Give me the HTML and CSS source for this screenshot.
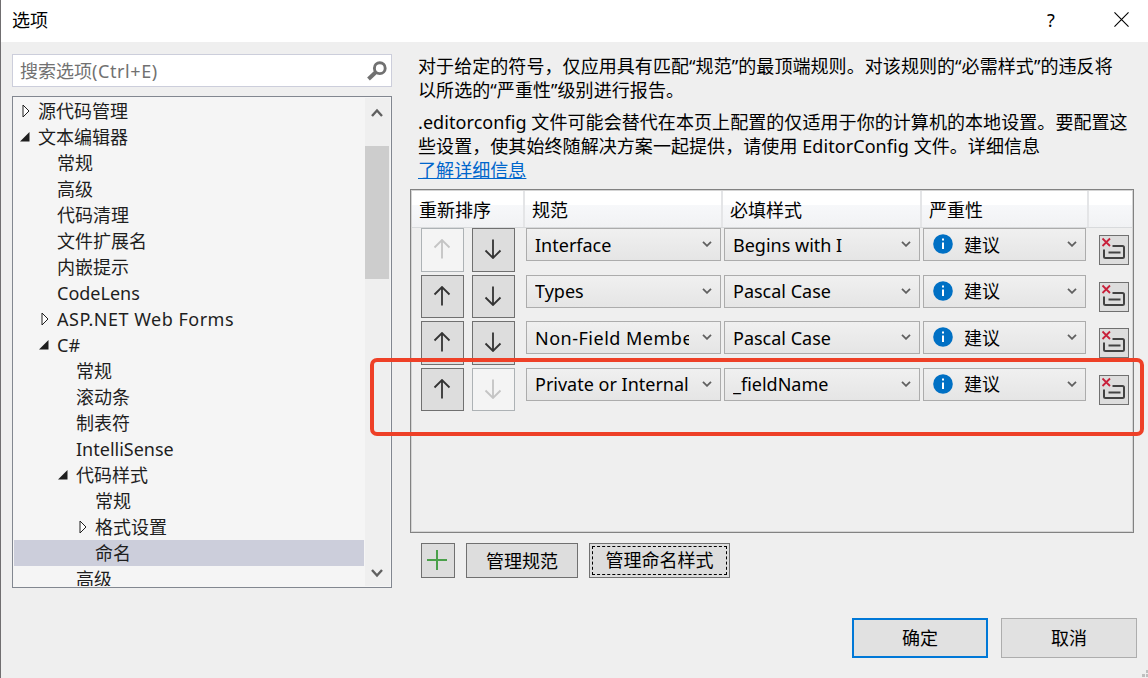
FILE: index.html
```
<!DOCTYPE html>
<html lang="zh-CN">
    <head>
        <meta charset="UTF-8">
        <title>选项</title>
        <link rel="stylesheet" href="styles.css">
    </head>
    <body>
        <svg class="defs">
            <symbol id="up" viewBox="0 0 20 20"><path d="M10 19.5V1M2.500 8.500L10 1l7.500 7.500"/></symbol>
            <symbol id="down" viewBox="0 0 20 20"><path d="M10 .5V19M2.500 11.500L10 19l7.500-7.500"/></symbol>
            <symbol id="chevron" viewBox="0 0 10 6"><path d="M1 .8l4 4 4-4"/></symbol>
            <symbol id="closed" viewBox="0 0 8 14"><path d="M1 1v12l6-6z"/></symbol>
            <symbol id="open" viewBox="0 0 10 10"><path d="M9.500 0v9.500H0z"/></symbol>
            <symbol id="info" viewBox="0 0 20 20"><circle cx="10" cy="10" r="9.800" fill="#0070c4"/><path d="M10 8.500v6.500M10 4.500v2" stroke="#fff" stroke-width="2" fill="none"/></symbol>
            <symbol id="remove" viewBox="0 0 28 28">
                <path d="M12.500 10h10q1.500 0 1.500 1.500v9q0 1.500-1.500 1.500h-17q-1.500 0-1.500-1.500v-7" fill="none" stroke="#424242" stroke-width="2"/>
                <path d="M8.500 16.500h12" stroke="#424242" stroke-width="2"/>
                <path d="M2.500 2.500l7.500 7.500M10 2.500L2.500 10" stroke="#c8203a" stroke-width="1.800"/>
            </symbol>
        </svg>

        <div class="dialog">
            <div class="titlebar">
                <span class="title">选项</span>
                <span class="help">?</span>
                <svg class="close" viewBox="0 0 16 16"><path d="M.5.5l15 15M15.500.5l-15 15"/></svg>
            </div>

            <div class="content">
                <div class="sidebar">
                    <div class="search">
                        <div>搜索选项<span class="wide">(Ctrl+E)</span></div>
                        <svg viewBox="0 0 20 20"><circle cx="12.800" cy="7.200" r="5.400" fill="none" stroke="#717171" stroke-width="2.900"/><path d="M9 11L1.500 18" stroke="#717171" stroke-width="4"/></svg>
                    </div>
                    <div class="tree">
                        <ul class="nodes">
                            <li class="l1"><svg class="closed"><use href="#closed"/></svg>源代码管理</li>
                            <li class="l1"><svg class="open"><use href="#open"/></svg>文本编辑器</li>
                            <li class="l2">常规</li>
                            <li class="l2">高级</li>
                            <li class="l2">代码清理</li>
                            <li class="l2">文件扩展名</li>
                            <li class="l2">内嵌提示</li>
                            <li class="l2">CodeLens</li>
                            <li class="l2"><svg class="closed"><use href="#closed"/></svg><span class="loose">ASP.NET Web Forms</span></li>
                            <li class="l2"><svg class="open"><use href="#open"/></svg>C#</li>
                            <li class="l3">常规</li>
                            <li class="l3">滚动条</li>
                            <li class="l3">制表符</li>
                            <li class="l3">IntelliSense</li>
                            <li class="l3"><svg class="open"><use href="#open"/></svg>代码样式</li>
                            <li class="l4">常规</li>
                            <li class="l4"><svg class="closed"><use href="#closed"/></svg>格式设置</li>
                            <li class="l4 selected">命名</li>
                            <li class="l3">高级</li>
                        </ul>
                        <div class="scrollbar">
                            <svg viewBox="0 0 12 9"><path d="M1 8l5-5.500L11 8"/></svg>
                            <div class="thumb"></div>
                            <svg viewBox="0 0 12 9"><path d="M1 1l5 5.500L11 1"/></svg>
                        </div>
                    </div>
                </div>

                <div class="page">
                    <p>对于给定的符号，仅应用具有匹配“规范”的最顶端规则。对该规则的“必需样式”的违反将<br>以所选的“严重性”级别进行报告。</p>
                    <p>.editorconfig 文件可能会替代在本页上配置的仅适用于你的计算机的本地设置。要配置这<br>些设置，使其始终随解决方案一起提供，请使用 EditorConfig 文件。详细信息<br><a class="link">了解详细信息</a></p>

                    <div class="grid">
                        <div class="row head">
                            <div>重新排序</div><div>规范</div><div>必填样式</div><div>严重性</div><div></div>
                        </div>
                        <div class="row">
                            <div class="order"><button disabled><svg><use href="#up"/></svg></button><button><svg><use href="#down"/></svg></button></div>
                            <div class="combo"><span>Interface</span><svg><use href="#chevron"/></svg></div>
                            <div class="combo"><span>Begins with I</span><svg><use href="#chevron"/></svg></div>
                            <div class="combo severity"><svg class="info"><use href="#info"/></svg><span>建议</span><svg><use href="#chevron"/></svg></div>
                            <button class="remove"><svg><use href="#remove"/></svg></button>
                        </div>
                        <div class="row">
                            <div class="order"><button><svg><use href="#up"/></svg></button><button><svg><use href="#down"/></svg></button></div>
                            <div class="combo"><span>Types</span><svg><use href="#chevron"/></svg></div>
                            <div class="combo"><span>Pascal Case</span><svg><use href="#chevron"/></svg></div>
                            <div class="combo severity"><svg class="info"><use href="#info"/></svg><span>建议</span><svg><use href="#chevron"/></svg></div>
                            <button class="remove"><svg><use href="#remove"/></svg></button>
                        </div>
                        <div class="row">
                            <div class="order"><button><svg><use href="#up"/></svg></button><button><svg><use href="#down"/></svg></button></div>
                            <div class="combo"><span class="loose">Non-Field Members</span><svg><use href="#chevron"/></svg></div>
                            <div class="combo"><span>Pascal Case</span><svg><use href="#chevron"/></svg></div>
                            <div class="combo severity"><svg class="info"><use href="#info"/></svg><span>建议</span><svg><use href="#chevron"/></svg></div>
                            <button class="remove"><svg><use href="#remove"/></svg></button>
                        </div>
                        <div class="row">
                            <div class="order"><button><svg><use href="#up"/></svg></button><button disabled><svg><use href="#down"/></svg></button></div>
                            <div class="combo"><span>Private or Internal</span><svg><use href="#chevron"/></svg></div>
                            <div class="combo"><span>_fieldName</span><svg><use href="#chevron"/></svg></div>
                            <div class="combo severity"><svg class="info"><use href="#info"/></svg><span>建议</span><svg><use href="#chevron"/></svg></div>
                            <button class="remove"><svg><use href="#remove"/></svg></button>
                        </div>
                    </div>

                    <div class="actions">
                        <button class="add"><svg viewBox="0 0 20 20"><path d="M10 0v20M0 10h20"/></svg></button>
                        <button class="specs">管理规范</button>
                        <button class="styles"><span>管理命名样式</span></button>
                    </div>
                </div>
            </div>

            <div class="footer">
                <button class="ok">确定</button>
                <button>取消</button>
            </div>
            <svg class="grip" viewBox="0 0 6 7"><path d="M4 0h2v3H4zM0 4h3v3H0zM4 4h2v3H4z"/></svg>
            <div class="highlight"></div>
        </div>
    </body>
</html>
```
FILE: styles.css
```
* {
    box-sizing: border-box;
}
body {
    margin: 0;
    font: 18px/24px "Noto Sans", "Noto Sans CJK SC", sans-serif;
    color: #000;
}
button {
    font: inherit;
    color: #000;
    padding: 0;
    border: 1px solid #707070;
    background: #ddd;
    display: flex;
    align-items: center;
    justify-content: center;
}
svg {
    display: block;
    flex: none;
}
.defs {
    display: none;
}
.loose {
    letter-spacing: 0.5px;
}
.wide {
    letter-spacing: 0.6px;
}
.dialog {
    position: relative;
    width: 1148px;
    height: 678px;
    overflow: hidden;
    background: #efefef;
    border-left: 1px solid #706e70;
}
.titlebar {
    height: 42px;
    background: #fff;
    display: flex;
    align-items: center;
    padding: 0 19px 3px 11px;
}
.title {
    flex: 1;
}
.help {
    width: 10px;
    margin-right: 57px;
}
.close {
    width: 15px;
    height: 15px;
    fill: none;
    stroke: #000;
    stroke-width: 1.2;
}
.content {
    display: flex;
    height: 536px;
    padding: 12px 0 0 11px;
}
.sidebar {
    width: 380px;
    margin-right: 18px;
}
.search {
    height: 33px;
    border: 1px solid #cccedb;
    background: #fff;
    display: flex;
    align-items: center;
    justify-content: space-between;
    padding: 0 4px 0 7px;
    color: #717171;
}
.search svg {
    width: 20px;
    height: 20px;
}
.tree {
    height: 492px;
    margin-top: 9px;
    border: 1px solid #828790;
    background: #f5f5f5;
    display: flex;
    padding: 1px;
}
.nodes {
    list-style: none;
    margin: 0;
    padding: 0;
    width: 350px;
    height: 488px;
    overflow: hidden;
    color: #1e1e1e;
}
.nodes li {
    height: 26px;
    line-height: 26px;
    display: flex;
    align-items: center;
    white-space: nowrap;
}
.nodes .l1 { padding-left: 24px; }
.nodes .l2 { padding-left: 43px; }
.nodes .l3 { padding-left: 62px; }
.nodes .l4 { padding-left: 81px; }
.nodes .selected {
    background: #cccedb;
}
.closed {
    width: 8px;
    height: 14px;
    margin: 0 8px 0 -16px;
    fill: #fff;
    stroke: #1e1e1e;
}
.open {
    width: 10px;
    height: 10px;
    margin: 0 8px 1px -18px;
    fill: #1e1e1e;
}
.scrollbar {
    width: 25px;
    margin-left: 1px;
    background: #efefef;
    display: flex;
    flex-direction: column;
    padding: 10px 0 8px;
}
.scrollbar svg {
    width: 12px;
    height: 9px;
    margin-left: 6px;
    fill: none;
    stroke: #606060;
    stroke-width: 2.4;
}
.thumb {
    width: 24px;
    height: 133px;
    margin: 29px 0 auto;
    background: #cdcdcd;
}
.page {
    width: 724px;
}
.page p {
    margin: 0 0 8px 8px;
    white-space: nowrap;
    letter-spacing: 0.07px;
}
.link {
    color: #0066cc;
    text-decoration: underline;
}
.grid {
    height: 344px;
    margin-top: -1px;
    border: 1px solid #828282;
    box-shadow: inset 1px 1px #d4d4d4, inset -1px -1px #d4d4d4;
    padding: 1px;
}
.row {
    height: 46.6px;
    display: flex;
    align-items: flex-start;
}
.row.head {
    height: 37px;
    align-items: stretch;
    background: linear-gradient(#fff 40%, #f7f8fa 40%, #f1f2f4);
    border-bottom: 1px solid #d8dadc;
}
.head div {
    border-right: 2px solid #e4e5e7;
    padding: 7px 0 0 7px;
}
.head div:nth-child(1) { width: 113px; }
.head div:nth-child(2) { width: 198px; }
.head div:nth-child(3) { width: 199px; }
.head div:nth-child(4) { width: 167px; }
.head div:nth-child(5) { flex: 1; border: 0; }
.order {
    display: flex;
    gap: 8px;
    margin: 0 11px 0 9px;
}
.order button {
    width: 43px;
    height: 43.5px;
}
.order svg {
    width: 20px;
    height: 20px;
    margin: 0 2px 1px 0;
    fill: none;
    stroke: #333;
    stroke-width: 1.8;
}
.order button:disabled {
    background: #f4f4f4;
    border-color: #adb2b5;
}
.order button:disabled svg {
    stroke: #c4c4c4;
}
.combo {
    width: 195px;
    height: 33px;
    margin-right: 3px;
    border: 1px solid #acacac;
    background: linear-gradient(#f0f0f0, #e5e5e5);
    display: flex;
    align-items: center;
    padding: 0 8px;
}
.combo + .combo {
    width: 196px;
}
.combo.severity {
    width: 163px;
    margin-right: 13px;
}
.combo span {
    flex: 1;
    min-width: 0;
    margin-right: 13px;
    overflow: hidden;
    white-space: nowrap;
}
.combo svg {
    width: 10px;
    height: 6px;
    margin-bottom: 1px;
    fill: none;
    stroke: #606060;
    stroke-width: 1.8;
}
.combo .info {
    width: 20px;
    height: 20px;
    margin: 0 11px 1px 1px;
    stroke: none;
}
.remove {
    width: 30px;
    height: 30px;
    margin-top: 7px;
}
.remove svg {
    width: 28px;
    height: 28px;
}
.actions {
    display: flex;
    margin: 10px 0 0 11px;
}
.actions button {
    height: 35px;
    margin-right: 11px;
}
.actions .add { width: 34px; }
.actions .specs { width: 112px; }
.actions .styles { width: 141px; }
.add svg {
    width: 20px;
    height: 20px;
    margin: 0 2px 2px 0;
    stroke: #4aa04a;
    stroke-width: 2;
}
.styles span {
    width: 135px;
    height: 29px;
    line-height: 27px;
    border: 1px dashed #000;
}
.footer {
    display: flex;
    justify-content: flex-end;
    gap: 13px;
    padding: 40px 11px 0 0;
}
.footer button {
    width: 136px;
    height: 40px;
    border-color: #adadad;
    background: #e1e1e1;
}
.footer .ok {
    border: 2px solid #0078d7;
}
.grip {
    position: absolute;
    right: 0;
    bottom: 1px;
    width: 6px;
    height: 7px;
    fill: #bfbfbf;
}
/* red frame marking the private field rule */
.highlight {
    position: absolute;
    left: 369px;
    top: 358px;
    width: 774px;
    height: 78px;
    border: 4px solid #ee4027;
    border-radius: 7px;
}
```
